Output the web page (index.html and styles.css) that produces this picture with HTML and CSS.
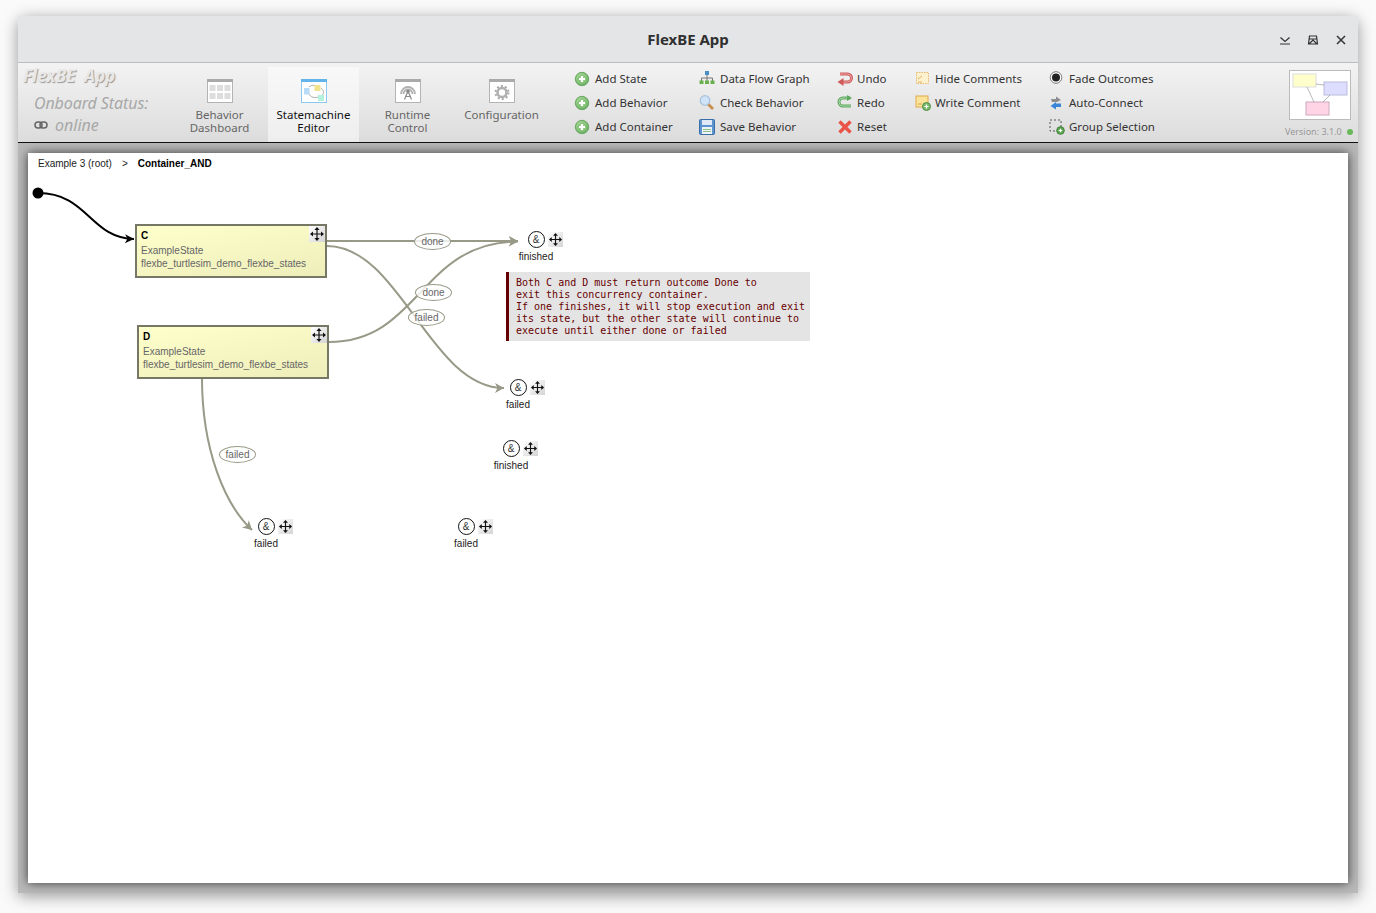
FILE: index.html
```html
<!DOCTYPE html>
<html lang="en">
<head>
  <meta charset="UTF-8" />
  <title>FlexBE App</title>
  <link rel="stylesheet" href="styles.css">
</head>
<body>

  <!-- shared icons -->
  <svg class="icon-defs" aria-hidden="true">
    <defs>
      <radialGradient id="plusGrad" cx="40%" cy="35%" r="75%">
        <stop offset="0" stop-color="#b5dfa5"/>
        <stop offset="1" stop-color="#5fa755"/>
      </radialGradient>
      <linearGradient id="handleGrad" x1="0" y1="0" x2="1" y2="1">
        <stop offset="0" stop-color="#ffffff"/>
        <stop offset="1" stop-color="#d4d4d4"/>
      </linearGradient>
      <marker id="headBlack" markerUnits="userSpaceOnUse" markerWidth="12" markerHeight="12" refX="10" refY="6" orient="auto">
        <path d="M1 1.5 L10 6 L1 10.5 L3.5 6 Z" fill="#000"/>
      </marker>
      <marker id="headGrey" markerUnits="userSpaceOnUse" markerWidth="12" markerHeight="12" refX="10" refY="6" orient="auto">
        <path d="M1 1 L10 6 L1 11 L3.5 6 Z" fill="#999988"/>
      </marker>
      <symbol id="i-plus" viewBox="0 0 16 16">
        <circle cx="8" cy="8" r="6.700" fill="url(#plusGrad)" stroke="#6aa863"/>
        <circle cx="8" cy="8" r="4.400" fill="#8cc780"/>
        <path d="M8 5v6M5 8h6" stroke="#fff" stroke-width="2.200"/>
      </symbol>
      <symbol id="i-move" viewBox="0 0 16 16">
        <rect width="16" height="16" fill="url(#handleGrad)"/>
        <path d="M8 3v10M3 8h10" stroke="#111" stroke-width="1.200"/>
        <path d="M8 1l2.600 3H5.400zM8 15l2.600-3H5.400zM1 8l3-2.600v5.200zM15 8l-3-2.600v5.200z" fill="#111"/>
      </symbol>
    </defs>
  </svg>

  <div class="window">
    <header class="titlebar">
      <h1>FlexBE App</h1>
      <div class="window-controls">
        <svg width="12" height="12" viewBox="0 0 12 12"><path d="M1.500 3.500L6 7.500l4.500-4M1 10h10" fill="none" stroke="#333" stroke-width="1.200"/></svg>
        <svg width="12" height="12" viewBox="0 0 12 12"><path d="M2.500 2h7l1 8h-9zM2.500 5h7M2 10l4-4 4 4" fill="none" stroke="#333" stroke-width="1.200"/></svg>
        <svg width="12" height="12" viewBox="0 0 12 12"><path d="M2 2l8 8M10 2l-8 8" fill="none" stroke="#333" stroke-width="1.500"/></svg>
      </div>
    </header>

    <div class="toolbar">
      <div class="brand">
        <div class="brand-name">FlexBE&nbsp; App</div>
        <div class="brand-status">Onboard Status:</div>
        <div class="brand-link">
          <svg width="14" height="8" viewBox="0 0 14 8"><rect x="1" y="1" width="7" height="6" rx="3" fill="none" stroke="#666" stroke-width="1.500"/><rect x="6" y="1" width="7" height="6" rx="3" fill="none" stroke="#666" stroke-width="1.500"/></svg>
          <span>online</span>
        </div>
      </div>

      <nav class="tabs">
        <div class="tab">
          <svg class="tab-icon" width="26" height="24" viewBox="0 0 26 24">
            <rect x=".5" y=".5" width="25" height="23" fill="#fff" stroke="#b4b4b4"/>
            <rect width="26" height="3" fill="#aaa"/>
            <path d="M2.500 6h6v6h-6zM10 6h6v6h-6zM17.500 6h6v6h-6zM2.500 14h6v6h-6zM10 14h6v6h-6zM17.500 14h6v6h-6z" fill="#ddd"/>
          </svg>
          <span>Behavior Dashboard</span>
        </div>
        <div class="tab tab-active">
          <svg class="tab-icon" width="26" height="24" viewBox="0 0 26 24">
            <rect x=".5" y=".5" width="25" height="23" fill="#fff" stroke="#8cc8f0"/>
            <rect width="26" height="3" fill="#62b4ea"/>
            <path d="M8 8c1-1.500 4-2 6-1.500M20 9c3 2 3 5 1.500 7M19 17.500c-5 2-10 1-11-3" fill="none" stroke="#999" stroke-width=".8"/>
            <rect x="3" y="9" width="5.500" height="6.500" fill="#b8dcf8"/>
            <rect x="13.500" y="6" width="6" height="6" fill="#f1e38c"/>
            <rect x="17" y="16" width="6" height="6" fill="#b5f2dc"/>
          </svg>
          <span>Statemachine Editor</span>
        </div>
        <div class="tab">
          <svg class="tab-icon" width="26" height="24" viewBox="0 0 26 24">
            <rect x=".5" y=".5" width="25" height="23" fill="#fff" stroke="#b4b4b4"/>
            <rect width="26" height="3" fill="#aaa"/>
            <path d="M6 15a7 7 0 1 1 14 0M8.500 15a4.500 4.500 0 1 1 9 0" fill="none" stroke="#b0b0b0" stroke-width="1.800"/>
            <path d="M13 12l-3.500 8.500M13 12l3.500 8.500M10.500 17.500h5" fill="none" stroke="#888" stroke-width="1.200"/>
            <circle cx="13" cy="12.500" r="1.700" fill="#888"/>
          </svg>
          <span>Runtime Control</span>
        </div>
        <div class="tab">
          <svg class="tab-icon" width="26" height="24" viewBox="0 0 26 24">
            <rect x=".5" y=".5" width="25" height="23" fill="#fff" stroke="#b4b4b4"/>
            <rect width="26" height="3" fill="#aaa"/>
            <circle cx="13" cy="13.500" r="4.500" fill="none" stroke="#b0b0b0" stroke-width="2.600"/>
            <circle cx="13" cy="13.500" r="6.500" fill="none" stroke="#aaa" stroke-width="2" stroke-dasharray="2 2.100"/>
          </svg>
          <span>Configuration</span>
        </div>
      </nav>

      <div class="actions">
        <div class="action-col col-add">
          <div class="action"><svg class="ti"><use href="#i-plus"/></svg>Add State</div>
          <div class="action"><svg class="ti"><use href="#i-plus"/></svg>Add Behavior</div>
          <div class="action"><svg class="ti"><use href="#i-plus"/></svg>Add Container</div>
        </div>
        <div class="action-col col-tools">
          <div class="action">
            <svg class="ti" viewBox="0 0 16 16"><path d="M8 4v3M2.500 10V7h11v3M8 7v3" fill="none" stroke="#777" stroke-width="1"/><rect x="6" y="0" width="4" height="4" fill="#4a90c8"/><rect x="0.500" y="9.500" width="4" height="3.500" fill="#6bb04f"/><rect x="6" y="9.500" width="4" height="3.500" fill="#6bb04f"/><rect x="11.500" y="9.500" width="4" height="3.500" fill="#6bb04f"/></svg>Data Flow Graph
          </div>
          <div class="action">
            <svg class="ti" viewBox="0 0 16 16"><path d="M9 9l5 5" stroke="#c98d4e" stroke-width="2.800"/><circle cx="6" cy="5.500" r="4.800" fill="#cfe3f7" stroke="#a8c2dc" stroke-width="1.300"/></svg>Check Behavior
          </div>
          <div class="action">
            <svg class="ti" viewBox="0 0 16 16"><rect x=".5" y=".5" width="15" height="15" rx="1" fill="#5d93cf" stroke="#3a6ea8"/><rect x="3" y="1" width="10" height="5" fill="#dfeaf6"/><rect x="3" y="8" width="10" height="7" fill="#eef3f8"/><path d="M4 10.500h8M4 12.500h8" stroke="#8fc08a"/></svg>Save Behavior
          </div>
        </div>
        <div class="action-col col-edit">
          <div class="action">
            <svg class="ti" viewBox="0 0 16 16"><path d="M3 3h7.500a4 4 0 0 1 0 8H5" fill="none" stroke="#cf5a5a" stroke-width="3"/><path d="M3 3h7.500a4 4 0 0 1 0 8H5" fill="none" stroke="#eaa6a6" stroke-width="1"/><path d="M6.500 7v8L0.500 11z" fill="#cf5a5a"/></svg>Undo
          </div>
          <div class="action">
            <svg class="ti" viewBox="0 0 16 16"><path d="M13 3H6a4 4 0 0 0 0 8h8" fill="none" stroke="#5fa860" stroke-width="3"/><path d="M13 3H6a4 4 0 0 0 0 8h8" fill="none" stroke="#a8d8a8" stroke-width="1"/><path d="M10 0v6l5-3z" fill="#5fa860"/></svg>Redo
          </div>
          <div class="action">
            <svg class="ti" viewBox="0 0 16 16"><path d="M2.500 2.500l11 11M13.500 2.500l-11 11" stroke="#ea5448" stroke-width="3.400"/></svg>Reset
          </div>
        </div>
        <div class="action-col col-comment">
          <div class="action">
            <svg class="ti" viewBox="0 0 16 16"><rect x="1.500" y="1.500" width="12" height="11" fill="#fdf1d0" stroke="#e8b96a" stroke-dasharray="1.500 1"/><path d="M3 8l4-3M3 11h4" stroke="#e3b45f"/></svg>Hide Comments
          </div>
          <div class="action">
            <svg class="ti" viewBox="0 0 16 16"><rect x="1" y="1" width="12" height="11" fill="#fbe49a" stroke="#e2a94f"/><path d="M3 9h4" stroke="#d9a24a"/><circle cx="11.500" cy="11.500" r="4" fill="#7dbb6e" stroke="#4d8f45"/><path d="M11.500 9.500v4M9.500 11.500h4" stroke="#fff" stroke-width="1.200"/></svg>Write Comment
          </div>
        </div>
        <div class="action-col col-view">
          <div class="action">
            <svg class="ti" viewBox="0 0 16 16"><circle cx="7" cy="6.500" r="5.800" fill="#fff" stroke="#777"/><circle cx="7" cy="6.500" r="4" fill="#222"/></svg>Fade Outcomes
          </div>
          <div class="action">
            <svg class="ti" viewBox="0 0 16 16"><path d="M2 4h5V1.500L12 5 8 7H3z" fill="#8c8c8c"/><path d="M12 8.500H7V7L1.500 11 7 14.500V12h5z" fill="#3a86d6"/></svg>Auto-Connect
          </div>
          <div class="action">
            <svg class="ti" viewBox="0 0 16 16"><rect x="1" y="1" width="11" height="11" fill="none" stroke="#555" stroke-dasharray="2 2"/><circle cx="11.500" cy="11.500" r="3.800" fill="#5fa855" stroke="#3f7f39"/><path d="M11.500 9.700v3.600M9.700 11.500h3.600" stroke="#fff" stroke-width="1.200"/></svg>Group Selection
          </div>
        </div>
      </div>

      <div class="logo-box">
        <svg class="logo" width="62" height="50" viewBox="0 0 62 50">
          <rect x=".5" y=".5" width="61" height="49" fill="#fff" stroke="#bbb"/>
          <rect x="4" y="4" width="23" height="13" fill="#ffffcc" stroke="#ddd"/>
          <rect x="35" y="12" width="23" height="13" fill="#ddddff" stroke="#bbbbdd"/>
          <rect x="17" y="32" width="23" height="13" fill="#ffd5e5" stroke="#ccaabb"/>
          <path d="M27 14l8 1M18 17l7 15M41 25l-7 7" stroke="#888" stroke-width=".6"/>
        </svg>
        <div class="version">Version: 3.1.0<span class="version-dot"></span></div>
      </div>
    </div>

    <main class="workspace">
      <div class="canvas">
        <div class="breadcrumb"><span>Example 3 (root)</span><span class="crumb-sep">&gt;</span><b>Container_AND</b></div>

        <!-- viewBox uses window coordinates, the canvas sits at 28,153 -->
        <svg class="edges" viewBox="28 153 1320 730">
          <circle cx="38" cy="193" r="5.500" fill="#000"/>
          <path class="edge-init" d="M38 193C88 193 90 238 134 239"/>
          <path class="edge" d="M327 241H518"/>
          <path class="edge" d="M327 246C400 246 430 388 504 388"/>
          <path class="edge" d="M329 342C420 342 420 242 518 241.500"/>
          <path class="edge" d="M202 378C202 450 225 505 252 530"/>
        </svg>

        <div class="state state-c">
          <b>C</b>
          <div>ExampleState</div>
          <div>flexbe_turtlesim_demo_flexbe_states</div>
          <svg class="state-move"><use href="#i-move"/></svg>
        </div>
        <div class="state state-d">
          <b>D</b>
          <div>ExampleState</div>
          <div>flexbe_turtlesim_demo_flexbe_states</div>
          <svg class="state-move"><use href="#i-move"/></svg>
        </div>

        <span class="edge-label label-done-c">done</span>
        <span class="edge-label label-done-d">done</span>
        <span class="edge-label label-failed-c">failed</span>
        <span class="edge-label label-failed-d">failed</span>

        <pre class="comment">Both C and D must return outcome Done to
exit this concurrency container.
If one finishes, it will stop execution and exit
its state, but the other state will continue to
execute until either done or failed</pre>

        <div class="outcome outcome-1">
          <div class="outcome-head"><span class="outcome-dot">&amp;</span><svg class="outcome-move"><use href="#i-move"/></svg></div>
          <div class="outcome-name">finished</div>
        </div>
        <div class="outcome outcome-2">
          <div class="outcome-head"><span class="outcome-dot">&amp;</span><svg class="outcome-move"><use href="#i-move"/></svg></div>
          <div class="outcome-name">failed</div>
        </div>
        <div class="outcome outcome-3">
          <div class="outcome-head"><span class="outcome-dot">&amp;</span><svg class="outcome-move"><use href="#i-move"/></svg></div>
          <div class="outcome-name">finished</div>
        </div>
        <div class="outcome outcome-4">
          <div class="outcome-head"><span class="outcome-dot">&amp;</span><svg class="outcome-move"><use href="#i-move"/></svg></div>
          <div class="outcome-name">failed</div>
        </div>
        <div class="outcome outcome-5">
          <div class="outcome-head"><span class="outcome-dot">&amp;</span><svg class="outcome-move"><use href="#i-move"/></svg></div>
          <div class="outcome-name">failed</div>
        </div>
      </div>
    </main>
  </div>

</body>
</html>
```

FILE: styles.css
```css
* {
  box-sizing: border-box;
}
html, body {
  height: 100%;
}
body {
  margin: 0;
  padding: 16px 18px 20px;
  background: #fafafa;
  font-family: "Noto Sans", sans-serif;
  overflow: hidden;
}
.icon-defs {
  position: absolute;
  width: 0;
  height: 0;
}

.window {
  display: flex;
  flex-direction: column;
  height: 877px;
  border-radius: 8px 8px 0 0;
  box-shadow: 0 3px 16px rgba(0, 0, 0, 0.4);
  overflow: hidden;
}

.titlebar {
  position: relative;
  display: flex;
  align-items: center;
  justify-content: center;
  height: 47px;
  background: #e4e5e7;
  border-bottom: 1px solid #bdbdbd;
}
.titlebar h1 {
  margin: 0;
  font-size: 15px;
  font-weight: 700;
  color: #303030;
}
.window-controls {
  position: absolute;
  right: 11px;
  top: 18px;
  display: flex;
  gap: 16px;
}

.toolbar {
  display: flex;
  height: 80px;
  padding-top: 4px;
  background: linear-gradient(#f3f3f3, #dcdcdc);
  border-bottom: 1px solid #111;
}

.brand {
  width: 156px;
  padding-left: 5px;
  font-style: italic;
  color: #a8a8a8;
}
.brand-name {
  margin-top: -1px;
  font-size: 17px;
  font-weight: 700;
  line-height: 20px;
  color: #e8e8e8;
  text-shadow: 1px 1px 1px #999;
}
.brand-status {
  margin: 6px 0 0 11px;
  font-size: 16px;
  line-height: 22px;
  letter-spacing: -0.1px;
}
.brand-link {
  display: flex;
  align-items: center;
  gap: 7px;
  margin: 0 0 0 11px;
  font-size: 16px;
  line-height: 22px;
}

.tabs {
  display: flex;
  gap: 3px;
}
.tab {
  display: flex;
  flex-direction: column;
  align-items: center;
  width: 91px;
  padding-top: 12px;
  font-size: 11.5px;
  line-height: 13px;
  color: #666;
  text-align: center;
}
.tab span {
  padding: 0 8px;
}
.tab-icon {
  display: block;
  margin-bottom: 5px;
}
.tab-active {
  background: linear-gradient(#f8f8f8, #eeeeee);
  color: #111;
}

.actions {
  display: flex;
  margin-left: 27px;
}
.action-col {
  display: grid;
  grid-auto-rows: 24px;
}
.col-add { width: 125px; }
.col-tools { width: 138px; }
.col-edit { width: 78px; }
.col-comment { width: 134px; }
.col-view { width: 240px; }
.action {
  display: flex;
  align-items: center;
  gap: 5px;
  padding-bottom: 2px;
  font-size: 11.5px;
  color: #333;
}
.col-edit .action,
.col-comment .action,
.col-view .action {
  gap: 4px;
}
.ti {
  flex: none;
  width: 16px;
  height: 16px;
  margin-top: 2px;
}

.logo-box {
  position: absolute;
  left: 1285px;
  top: 70px;
  width: 70px;
}
.logo {
  display: block;
  margin-left: 4px;
}
.version {
  display: flex;
  align-items: center;
  margin-top: 6px;
  font-size: 9px;
  line-height: 12px;
  color: #999;
  white-space: nowrap;
}
.version-dot {
  width: 6px;
  height: 6px;
  margin-left: 5px;
  border-radius: 50%;
  background: #6ab85a;
}

.workspace {
  flex: 1;
  padding: 10px;
  background: #b9b9b9;
}
.canvas {
  position: relative;
  width: 1320px;
  height: 730px;
  background: #fff;
  box-shadow: 0 0 10px rgba(0, 0, 0, 0.7);
  font-family: "Liberation Sans", Arial, sans-serif;
  font-size: 10px;
}
.breadcrumb {
  position: relative;
  z-index: 1;
  padding: 4px 10px;
  line-height: 13px;
  color: #222;
}
.crumb-sep {
  margin: 0 10px;
}
.breadcrumb b {
  color: #000;
}

.edges {
  position: absolute;
  left: 0;
  top: 0;
  width: 1320px;
  height: 730px;
}
.edge {
  fill: none;
  stroke: #999988;
  stroke-width: 2;
  marker-end: url(#headGrey);
}
.edge-init {
  fill: none;
  stroke: #000;
  stroke-width: 2;
  marker-end: url(#headBlack);
}

.state {
  position: absolute;
  width: 192px;
  height: 54px;
  padding: 3px 4px 0;
  line-height: 13px;
  color: #666;
  background: linear-gradient(170deg, #ffffcc, #eeeebb);
  border: 2px solid #777766;
}
.state b {
  display: block;
  height: 15px;
  line-height: 13px;
  color: #000;
}
.state-c { left: 107px; top: 71px; }
.state-d { left: 109px; top: 172px; }
.state-move {
  position: absolute;
  right: 0;
  top: 0;
  width: 16px;
  height: 16px;
}

.edge-label {
  position: absolute;
  width: 37px;
  height: 17px;
  margin: -8px 0 0 -18px;
  line-height: 15px;
  text-align: center;
  color: #666;
  background: rgba(255, 255, 255, 0.8);
  border: 1px solid #999988;
  border-radius: 50%;
}
.label-done-c { left: 404px; top: 88px; }
.label-done-d { left: 405px; top: 139px; }
.label-failed-c { left: 398px; top: 164px; }
.label-failed-d { left: 209px; top: 301px; }

.comment {
  position: absolute;
  left: 478px;
  top: 119px;
  width: 304px;
  height: 69px;
  margin: 0;
  padding: 5px 0 0 7px;
  font-family: "DejaVu Sans Mono", monospace;
  font-size: 10px;
  line-height: 12px;
  color: #660000;
  background: #e4e4e4;
  border-left: 3px solid #660000;
}

.outcome {
  position: absolute;
  width: 64px;
  margin-left: -32px;
  color: #222;
  text-align: center;
}
.outcome-head {
  position: relative;
  display: flex;
  justify-content: center;
}
.outcome-dot {
  width: 17px;
  height: 17px;
  line-height: 15px;
  color: #333;
  background: #fff;
  border: 1.5px solid #111;
  border-radius: 50%;
}
.outcome-move {
  position: absolute;
  left: 44px;
  top: 1px;
  width: 15px;
  height: 15px;
}
.outcome-name {
  margin-top: 3px;
  line-height: 12px;
}
.outcome-1 { left: 508px; top: 78px; }
.outcome-2 { left: 490px; top: 226px; }
.outcome-3 { left: 483px; top: 287px; }
.outcome-4 { left: 238px; top: 365px; }
.outcome-5 { left: 438px; top: 365px; }
```
